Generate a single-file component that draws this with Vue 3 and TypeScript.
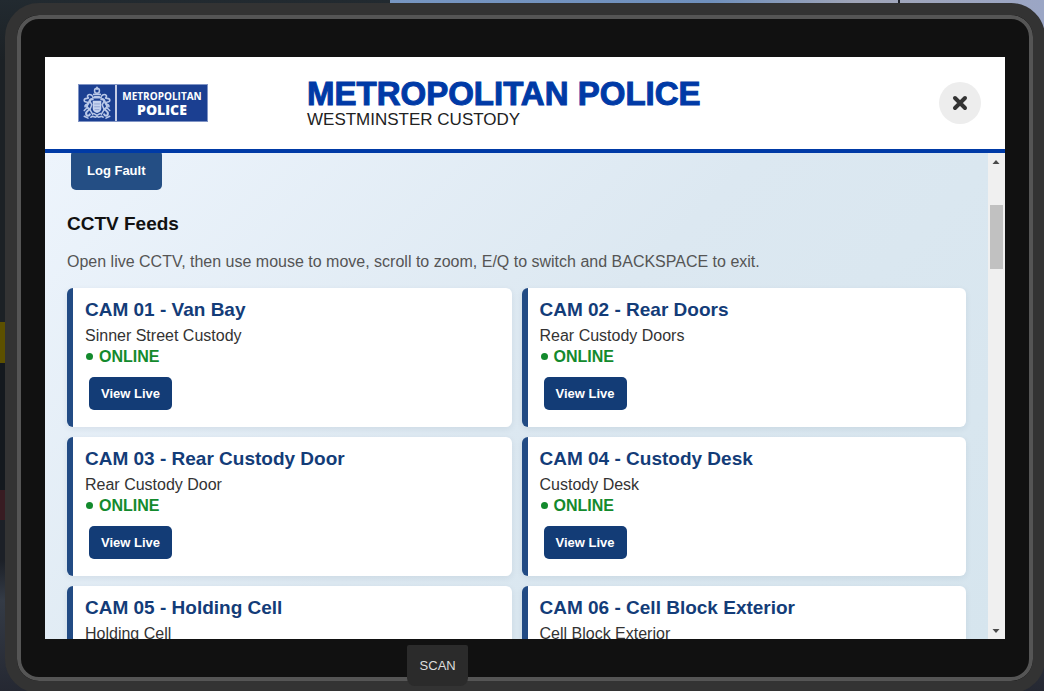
<script setup lang="ts">
interface Camera {
  id: string
  name: string
  location: string
}

const cameras: Camera[] = [
  { id: '01', name: 'Van Bay', location: 'Sinner Street Custody' },
  { id: '02', name: 'Rear Doors', location: 'Rear Custody Doors' },
  { id: '03', name: 'Rear Custody Door', location: 'Rear Custody Door' },
  { id: '04', name: 'Custody Desk', location: 'Custody Desk' },
  { id: '05', name: 'Holding Cell', location: 'Holding Cell' },
  { id: '06', name: 'Cell Block Exterior', location: 'Cell Block Exterior' },
]
</script>

<template>
  <div class="scene">
    <div class="tablet">
      <div class="screen">
        <header class="header">
          <div class="logo">
            <svg class="crest" viewBox="0 0 37 38" aria-hidden="true">
              <g fill="none" stroke="#b9c8e8" stroke-linecap="round">
                <circle cx="18.5" cy="6" r="2.6" stroke-width="1.6" />
                <path d="M15 10h7M16 12.5h5M18.500 2.500v2" stroke-width="1.800" />
                <path d="M14 12c-3-4-7-1-5 1s-4 0-4 3 4 1 4 3-4 1-3 4M23 12c3-4 7-1 5 1s4 0 4 3-4 1-4 3 4 1 3 4" stroke-width="1.700" />
                <path d="M14 15c-4-1-3 3-5 5s-1 4 1 5-3 2-3 5 3 3 4 1M23 15c4-1 3 3 5 5s1 4-1 5 3 2 3 5-3 3-4 1" stroke-width="2.200" />
                <path d="M11 17l2 4-2 5 3 5M26 17l-2 4 2 5-3 5M5 27l3-3M32 27l-3-3M5 33l4 2M32 33l-4 2" stroke-width="1.600" />
                <path d="M12 34c3-3 4 2 6.500-1 2.500 3 4-2 6.500 1M14 13.500h9M15 30l3.500 2 3.500-2" stroke-width="1.600" />
              </g>
              <path d="M14 16.500h9v8.500q0 3-4.500 4.500-4.500-1.500-4.500-4.500z" fill="#c5d2ee" />
              <path d="M15.500 20h6M15.500 23h6M16 26h5" stroke="#8ea2d2" stroke-width="1" />
            </svg>
            <div class="wordmark">
              <span class="word-top">METROPOLITAN</span>
              <span class="word-bottom">POLICE</span>
            </div>
          </div>
          <div class="heading">
            <h1>METROPOLITAN POLICE</h1>
            <p>WESTMINSTER CUSTODY</p>
          </div>
          <button class="close" type="button" aria-label="Close">
            <svg viewBox="0 0 16 16" aria-hidden="true">
              <path d="M3 3l10 10M13 3L3 13" stroke="#333" stroke-width="4" stroke-linecap="round" />
            </svg>
          </button>
        </header>

        <div class="body">
          <main class="content">
            <button class="btn log" type="button">Log Fault</button>
            <h2>CCTV Feeds</h2>
            <p class="hint">Open live CCTV, then use mouse to move, scroll to zoom, E/Q to switch and BACKSPACE to exit.</p>
            <div class="feeds">
              <article v-for="camera in cameras" :key="camera.id" class="card">
                <h3>CAM {{ camera.id }} - {{ camera.name }}</h3>
                <p class="location">{{ camera.location }}</p>
                <p class="status"><span class="dot"></span>ONLINE</p>
                <button class="btn" type="button">View Live</button>
              </article>
            </div>
          </main>
          <div class="scrollbar" aria-hidden="true">
            <svg viewBox="0 0 16 16"><path d="M4.500 11L8 7l3.500 4z" fill="#4a4a4a" /></svg>
            <div class="track"><div class="thumb"></div></div>
            <svg viewBox="0 0 16 16"><path d="M4.500 6L8 10l3.500-4z" fill="#4a4a4a" /></svg>
          </div>
        </div>
      </div>
      <button class="scan" type="button">SCAN</button>
    </div>
  </div>
</template>

<style>
body {
  margin: 0;
  overflow: hidden;
}
</style>

<style scoped>
* {
  box-sizing: border-box;
}
h1, h2, h3, p {
  margin: 0;
}
button {
  font-family: inherit;
  border: 0;
  cursor: pointer;
}
.scene {
  height: 100vh;
  padding: 3px 0 0 5px;
  overflow: hidden;
  font-family: "Liberation Sans", Arial, sans-serif;
  background:
    linear-gradient(#222a30, #1c2125) 0 0 / 37.4% 60px no-repeat,
    linear-gradient(90deg, transparent 0 898px, #1e2128 898px 900px, transparent 900px) 0 0 / 100% 3px no-repeat,
    linear-gradient(90deg, #7796c2 37%, #6f90bd 68%, #a0a5b8 82%, #9ba6c5) 0 0 / 100% 60px no-repeat,
    linear-gradient(#1c2125 0 322px, #5c5000 322px 363px, #14191e 363px 490px, #381c22 490px 520px, #1c2027 520px 560px, #343b46 600px, #252832 100%);
}
.tablet {
  position: relative;
  display: flex;
  height: calc(100% + 2px);
  margin-right: -1px;
  padding: 42px 28px;
  background: #111;
  border: 12px solid #333;
  border-radius: 34px;
  box-shadow: inset 0 0 0 4px #555;
}
.screen {
  flex: 1;
  min-width: 0;
  display: flex;
  flex-direction: column;
  overflow: hidden;
  background: #fff;
}
.header {
  position: relative;
  z-index: 1;
  display: flex;
  align-items: center;
  flex: none;
  height: 96px;
  padding: 0 24px 0 33px;
  background: #fff;
  border-bottom: 4px solid #003aa6;
}
.logo {
  display: flex;
  width: 130px;
  height: 38px;
  background: #1b3f91;
  border: 1px solid #8094c5;
}
.crest {
  width: 38px;
  border-right: 2px solid #c5cce4;
}
.wordmark {
  flex: 1;
  display: flex;
  flex-direction: column;
  align-items: center;
  justify-content: center;
  color: #fff;
  font-family: "Open Sans", "Noto Sans", sans-serif;
}
.word-top {
  font-size: 10px;
  line-height: 14px;
  font-weight: 700;
}
.word-bottom {
  font-size: 14px;
  line-height: 14px;
  font-weight: 800;
}
.heading {
  flex: 1;
  margin-left: 99px;
}
h1 {
  padding-top: 2px;
  font-size: 33px;
  line-height: 32px;
  font-weight: 900;
  color: #003aa6;
  -webkit-text-stroke: 1px #003aa6;
}
.heading p {
  font-size: 17px;
  line-height: 20px;
  color: #222;
}
.close {
  display: grid;
  place-items: center;
  width: 42px;
  height: 42px;
  padding: 0;
  border-radius: 50%;
  background: #ededed;
}
.close svg {
  width: 16px;
  height: 16px;
}
.body {
  flex: 1;
  min-height: 0;
  display: flex;
}
.content {
  flex: 1;
  min-width: 0;
  padding: 0 22px;
  overflow-y: auto;
  scrollbar-width: none;
  color: #111;
  background: linear-gradient(135deg, #edf4fc, #dce8f1 50%, #d6e5ee);
}
.btn {
  display: block;
  height: 33px;
  margin: 10px 4px 4px;
  padding: 0 12px;
  border-radius: 5px;
  color: #fff;
  background: #133c76;
  font-size: 13px;
  font-weight: 700;
}
.log {
  height: 40px;
  margin: -3px 4px 0;
  padding: 0 16px;
  background: #244e84;
}
h2 {
  margin-top: 22px;
  font-size: 19px;
  line-height: 24px;
}
.hint {
  margin-top: 16px;
  font-size: 16px;
  line-height: 20px;
  color: #555;
}
.feeds {
  display: grid;
  grid-template-columns: 1fr 1fr;
  gap: 10px;
  margin-top: 16px;
}
.card {
  padding: 10px 12px 13px;
  background: #fff;
  border-left: 6px solid #224b84;
  border-radius: 6px;
  box-shadow: 0 2px 6px rgba(20, 50, 80, 0.08);
}
h3 {
  font-size: 19px;
  line-height: 24px;
  color: #133c78;
}
.location {
  margin-top: 3px;
  font-size: 16px;
  line-height: 21px;
  color: #333;
}
.status {
  display: flex;
  align-items: center;
  gap: 6px;
  padding-left: 1px;
  font-size: 16px;
  line-height: 21px;
  font-weight: 700;
  color: #138a2d;
}
.dot {
  width: 7px;
  height: 7px;
  border-radius: 50%;
  background: currentColor;
}
.scrollbar {
  display: flex;
  flex-direction: column;
  width: 17px;
  background: #f0f0f0;
}
.scrollbar svg {
  width: 16px;
  height: 16px;
}
.track {
  flex: 1;
  padding: 0 2px;
}
.thumb {
  height: 64px;
  margin-top: 36px;
  background: #c1c1c1;
}
.scan {
  position: absolute;
  left: 38.4%;
  bottom: -5px;
  width: 61px;
  height: 41px;
  padding: 0;
  color: #ddd;
  background: #2b2b2b;
  border-radius: 2px 2px 8px 8px;
  font-size: 13px;
}
</style>
